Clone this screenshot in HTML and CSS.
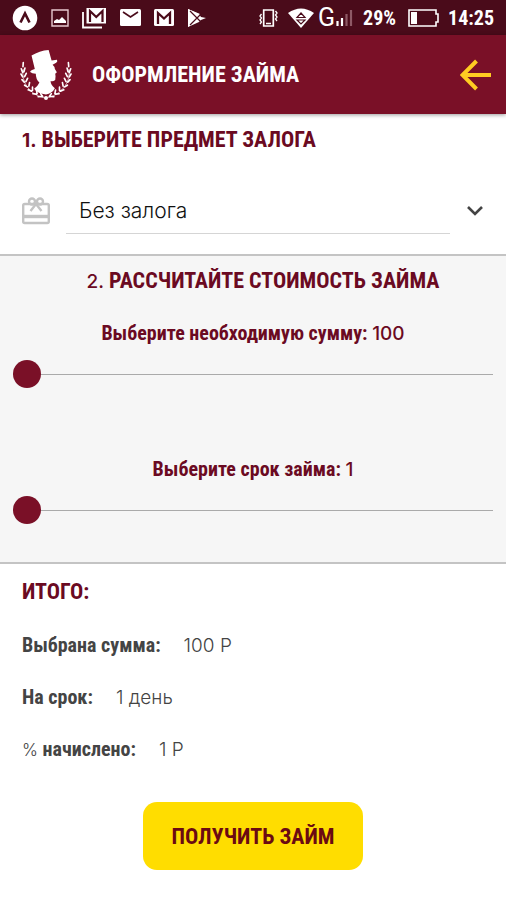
FILE: index.html
```html
<!DOCTYPE html>
<html lang="ru">
<head>
<meta charset="UTF-8">
<meta name="viewport" content="width=device-width, initial-scale=1.0">
<title>Оформление займа</title>
<link rel="stylesheet" href="styles.css">
</head>
<body>

<div class="statusbar">
  <div class="status-left">
    <svg width="26" height="26" viewBox="0 0 26 26"><circle cx="13" cy="13" r="12.3" fill="#fff"/><path d="M8.5 17.500 13 8.500l4.500 9" fill="none" stroke="#4a0b1a" stroke-width="2.600"/></svg>
    <svg width="18" height="18" viewBox="0 0 18 18"><path d="M1 1h16v16H1z" fill="none" stroke="#e8c9d0" stroke-width="1.400"/><path d="M3 14v-2l3-2 2 1 3-3 4 4v2z" fill="#fff"/></svg>
    <svg width="25" height="22" viewBox="0 0 25 22"><path d="M1 5v15.500h19" fill="none" stroke="#fff" stroke-width="1.800"/><path d="M4.500 1H24v15.500H4.500z" fill="#fff"/><path d="M8 15V4l6.250 6L20.500 4v11" fill="none" stroke="#4a0b1a" stroke-width="2.200"/></svg>
    <svg width="21" height="17" viewBox="0 0 21 17"><rect width="21" height="17" rx="1.500" fill="#fff"/><path d="m3 3 7.500 5L18 3" fill="none" stroke="#4a0b1a" stroke-width="1.600"/></svg>
    <svg width="20" height="17" viewBox="0 0 20 17"><rect width="20" height="17" rx="1.500" fill="#fff"/><path d="M4 15V4l6 5.500L16 4v11" fill="none" stroke="#4a0b1a" stroke-width="2.300"/></svg>
    <svg width="20" height="20" viewBox="0 0 20 20"><path d="M1 1v18L13 6z" fill="#fff"/><path d="m1 1 11 5 2 3 5 1-5 2-2 2-11 5z" fill="#fff"/><path d="m3 3 11 11M3 17 14 6" stroke="#4a0b1a" stroke-width="1.200"/></svg>
  </div>
  <div class="status-right">
    <svg width="19" height="18" viewBox="0 0 19 18"><path d="M4.700 1h9.600v16H4.700z" fill="none" stroke="#fff" stroke-width="1.700"/><path d="M7 14.500h5M2.500 5 1 7l1.500 2L1 11l1.500 2L1 15M16.500 2 18 4l-1.500 2L18 8l-1.500 2L18 12" fill="none" stroke="#fff" stroke-width="1.300"/></svg>
    <svg width="26" height="20" viewBox="0 0 26 20"><path d="M0 5Q13-4 26 5L13 20z" fill="#fff"/><path d="m13 5-4 4.500h8zM9 12h8l-4 4z" fill="none" stroke="#4a0b1a" stroke-width="1.200"/></svg>
    <span class="network">G</span>
    <svg class="signal" width="17" height="17" viewBox="0 0 17 17"><path d="M1.500 12v5M6 9v8" stroke="#fff" stroke-width="2.200"/><path d="M10.500 5v12M15 1v16" stroke="#8e5965" stroke-width="2.200"/></svg>
    <span class="percent">29%</span>
    <svg class="battery" width="32" height="18" viewBox="0 0 32 18"><path d="M1 1h27v4h2v8h-2v4H1z" fill="none" stroke="#fff" stroke-width="1.600"/><path d="M3 3h6v12H3z" fill="#fff"/></svg>
    <span>14:25</span>
  </div>
</div>

<header class="header">
  <svg class="logo" viewBox="60 144 158 158">
    <path d="M95 164q24-15 52-17l9 32 16-2q4 4-2 9l-11 6q7 6 7 13l6 10-5 4 1 8-1 11q-7 6-14 3 0 12 13 22-9 17-27 19-25-1-36-17 12-9 16-19-11-10-11-27-12 0-17-5-1-5 14-9z" fill="#fff"/>
    <path d="M70 206c-8 38 22 80 68 87M208 206c8 38-24 80-70 87" fill="none" stroke="#fff" stroke-width="2"/>
    <g fill="none" stroke="#fff" stroke-width="5" stroke-linecap="round">
      <path d="m70 185-1 13M64 204l4 11M75 202l-3 11M63 220l5 9M79 218l-5 10M66 237l7 8M83 233l-5 10M74 254l8 5M89 246l-2 11M85 268l10 4M98 260v10M99 280l11 1M110 269l2 11M115 289l11-1M123 280l6 8"/>
      <path d="m207 185 1 13M214 204l-4 11M203 202l3 11M215 220l-5 9M199 218l5 10M212 237l-7 8M195 233l5 10M204 254l-8 5M189 246l2 11M193 268l-10 4M180 260v10M179 280l-11 1M168 269l-2 11M163 289l-11-1M155 280l-6 8"/>
    </g>
    <circle cx="139" cy="293" r="6" fill="#fff"/>
  </svg>
  <h1>ОФОРМЛЕНИЕ ЗАЙМА</h1>
  <button class="back" aria-label="Назад">
    <svg width="32" height="32" viewBox="0 0 32 32"><path d="M31 16H3M16.500 2 2.500 16l14 14" fill="none" stroke="#fc2" stroke-width="4"/></svg>
  </button>
</header>

<section class="pledge">
  <h2><span class="num">1.</span> ВЫБЕРИТЕ ПРЕДМЕТ ЗАЛОГА</h2>
  <div class="field">
    <svg width="28" height="28" viewBox="0 0 28 28" fill="none" stroke="#c3c3c3" stroke-width="2.400"><rect x="1.200" y="7" width="25.600" height="19" rx="1.500"/><path d="M1 19.500h26" stroke-width="3.400"/><circle cx="10" cy="4.500" r="3"/><circle cx="18" cy="4.500" r="3"/><path d="m14 7-5.500 7M14 7l5.500 7"/></svg>
    <select id="pledge" aria-label="Предмет залога">
      <option>Без залога</option>
      <option>Автомобиль</option>
      <option>Недвижимость</option>
    </select>
    <svg class="chevron" width="18" height="12" viewBox="0 0 18 12"><path d="m2 2 7 7 7-7" fill="none" stroke="#444" stroke-width="2.600"/></svg>
  </div>
</section>

<section class="calc">
  <h2><span class="num">2.</span> РАССЧИТАЙТЕ СТОИМОСТЬ ЗАЙМА</h2>
  <div class="slider">
    <label for="sum">Выберите необходимую сумму: <span class="num" id="sumValue">100</span></label>
    <input id="sum" type="range" min="100" max="10000" step="100" value="100" oninput="calculate()">
  </div>
  <div class="slider">
    <label for="days">Выберите срок займа: <span class="num" id="daysValue">1</span></label>
    <input id="days" type="range" min="1" max="30" value="1" oninput="calculate()">
  </div>
</section>

<section class="total">
  <h2>ИТОГО:</h2>
  <dl>
    <div class="row"><dt>Выбрана сумма:</dt><dd id="totalSum">100 Р</dd></div>
    <div class="row"><dt>На срок:</dt><dd id="totalDays">1 день</dd></div>
    <div class="row"><dt><span class="light">%</span> начислено:</dt><dd id="totalPercent">1 Р</dd></div>
  </dl>
  <button class="submit">ПОЛУЧИТЬ ЗАЙМ</button>
</section>

<script>

function dayWord(n) {
  if (n % 10 === 1 && n % 100 !== 11) return 'день';
  if (n % 10 >= 2 && n % 10 <= 4 && (n % 100 < 10 || n % 100 > 20)) return 'дня';
  return 'дней';
}

function calculate() {
  let sum = Number(document.getElementById('sum').value);
  let days = Number(document.getElementById('days').value);

  document.getElementById('sumValue').textContent = sum;
  document.getElementById('daysValue').textContent = days;
  document.getElementById('totalSum').textContent = sum + ' Р';
  document.getElementById('totalDays').textContent = days + ' ' + dayWord(days);
  document.getElementById('totalPercent').textContent = Math.round(sum * days * 0.01) + ' Р'; // 1% per day
}
</script>

</body>
</html>
```
FILE: styles.css
```css
* {
  box-sizing: border-box;
}
body {
  margin: 0;
  background-color: #fff;
  color: #444;
  font-family: "Roboto Condensed", "Liberation Sans Narrow", Roboto, sans-serif;
  font-size: 20px;
  font-weight: bold;
}
h1, h2, dl, dd {
  margin: 0;
}
h1, h2 {
  font-size: 22px;
  line-height: 28px;
}
h2 {
  color: #6b0a22;
}
button, select, input {
  font: inherit;
}
.statusbar {
  display: flex;
  justify-content: space-between;
  align-items: center;
  height: 35px;
  padding: 0 12px;
  background-color: #4a0b1a;
  color: #fff;
}
.status-left, .status-right {
  display: flex;
  align-items: center;
}
.status-left {
  gap: 13px;
}
.status-right {
  gap: 10px;
}
.network {
  font-family: Roboto, sans-serif;
  font-size: 25px;
  font-weight: normal;
  line-height: 30px;
}
.status-right .network {
  margin: 0 -9px 0 -6px;
}
.status-right .battery {
  margin: 0 -2px 0 2px;
}
.header {
  display: flex;
  align-items: center;
  gap: 20px;
  height: 79px;
  padding: 0 14px 0 20px;
  background-color: #7a1027;
  color: #fff;
  box-shadow: 0 1px 4px rgba(0,0,0,0.4);
}
.logo {
  width: 52px;
  height: 52px;
}
.back {
  margin-left: auto;
  padding: 0;
  border: none;
  background: none;
  cursor: pointer;
}
.back svg {
  display: block;
}
.pledge {
  height: 140px;
  padding: 12px 22px 0;
}
.field {
  display: flex;
  align-items: center;
  gap: 16px;
  margin-top: 33px;
}
.field select {
  flex: 1;
  height: 47px;
  padding: 0 13px;
  appearance: none;
  border: none;
  border-bottom: 1px solid #d5d5d5;
  border-radius: 0;
  background: none;
  color: #111;
  font-family: Inter, sans-serif;
  font-size: 21px;
  font-weight: 300;
}
.chevron {
  pointer-events: none;
}
.calc {
  padding: 11px 13px 38px;
  border-top: 2px solid #c4c4c4;
  border-bottom: 2px solid #c4c4c4;
  background-color: #f6f6f6;
  text-align: center;
}
.calc h2 {
  padding-left: 20px;
}
.num {
  font-family: Inter, sans-serif;
  font-weight: 500;
  font-size: 19px;
  line-height: 1;
}
.pledge .num {
  font-weight: bold;
}
.slider {
  margin-top: 26px;
  color: #6b0a22;
}
.slider + .slider {
  margin-top: 69px;
}
.slider label {
  display: block;
  line-height: 24px;
}
.slider input {
  display: block;
  width: 100%;
  height: 28px;
  margin: 15px 0 0;
  appearance: none;
  background: none;
}
.slider input::-webkit-slider-runnable-track {
  height: 28px;
  background: linear-gradient(#aaa, #aaa) center / 100% 1px no-repeat;
}
.slider input::-webkit-slider-thumb {
  appearance: none;
  width: 28px;
  height: 28px;
  border-radius: 50%;
  background-color: #7a1027;
}
.total {
  padding: 14px 22px;
}
.row {
  display: flex;
  align-items: center;
  gap: 23px;
  height: 52px;
}
dl {
  margin-top: 13px;
}
dd, .light {
  font-family: Inter, sans-serif;
  font-size: 19px;
  font-weight: 300;
}
.light {
  font-size: 17px;
}
.submit {
  display: block;
  height: 68px;
  margin: 27px auto 0;
  padding: 0 29px;
  border: none;
  border-radius: 14px;
  background-color: #fd0;
  color: #6b0a12;
  font-size: 22px;
  cursor: pointer;
}
```
